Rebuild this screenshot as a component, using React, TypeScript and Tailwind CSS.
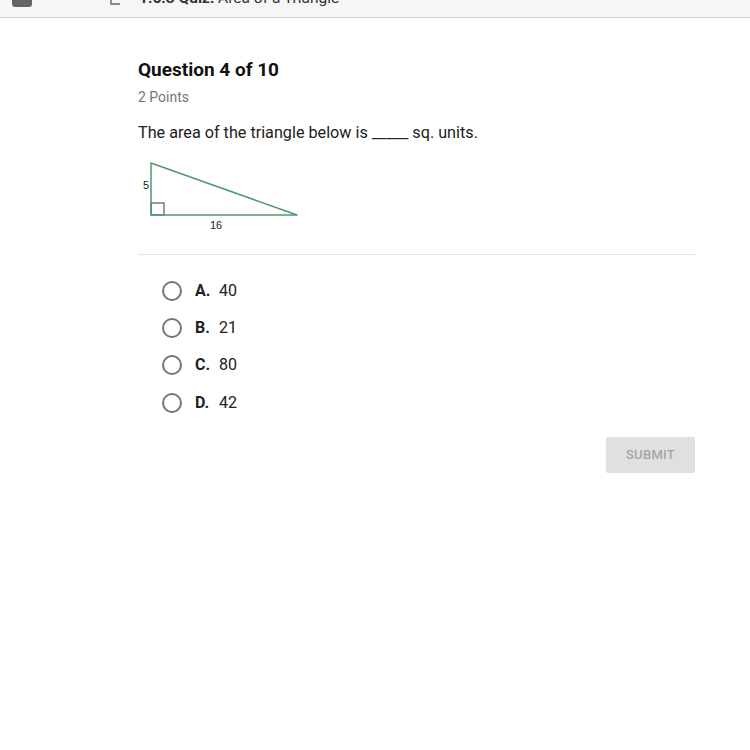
import { useState } from 'react';

const options = [
  { letter: 'A.', value: '40' },
  { letter: 'B.', value: '21' },
  { letter: 'C.', value: '80' },
  { letter: 'D.', value: '42' },
];

function Triangle() {
  return (
    <svg width="170" height="75" viewBox="0 0 170 75" className="block">
      <rect x="13" y="45" width="13" height="12" fill="none" stroke="#7a7a7a" strokeWidth="1.5" />
      <polyline points="13,57 13,5 159,57 13,57" fill="none" stroke="#4e9a6c" strokeWidth="1.5" strokeLinejoin="round" />
      <text x="5" y="31" fontSize="11" fill="#222" fontFamily="Liberation Sans, Arial, sans-serif">5</text>
      <text x="72" y="71" fontSize="11" fill="#222" fontFamily="Liberation Sans, Arial, sans-serif">16</text>
    </svg>
  );
}

export default function App() {
  const [selected, setSelected] = useState<number | null>(null);

  return (
    <div className="min-h-screen bg-white font-['Roboto',_sans-serif] text-[#212121]">
      {/* top bar, scrolled mostly out of view */}
      <div className="h-[18px] bg-[#f6f6f6] border-b border-[#d2d2d2] overflow-hidden flex items-start">
        <div className="ml-[12px] w-[20px] h-[7px] bg-[#646464] rounded-b-[3px]" />
        <div className="ml-[78px] mt-[-10px] w-[10px] h-[15px] border-l-2 border-b-2 border-[#8a8a8a]" />
        <div className="ml-[19px] mt-[-10px] text-[15.5px] leading-[16px] text-[#333] whitespace-nowrap">
          <span className="font-bold">1.6.3 Quiz:</span> Area of a Triangle
        </div>
      </div>

      <div className="ml-[138px] w-[557px] pt-[39px]">
        <h1 className="text-[19px] leading-[25px] font-bold text-[#111]">Question 4 of 10</h1>
        <div className="mt-[5px] text-[14px] leading-[20px] text-[#757575]">2 Points</div>
        <p className="mt-[16px] text-[16.2px] leading-[20px] text-[#212121]">
          The area of the triangle below is _____ sq. units.
        </p>
        <div className="mt-[15px]">
          <Triangle />
        </div>

        <div className="mt-[21px] h-px bg-[#e2e2e2]" />

        <div className="mt-[17px] ml-[24px]">
          {options.map((o, i) => (
            <label key={o.letter} className="h-[37.4px] flex items-center cursor-pointer" onClick={() => setSelected(i)}>
              <span className="w-[20px] h-[20px] rounded-full border-2 border-[#757575] flex items-center justify-center">
                {selected === i ? <span className="w-[10px] h-[10px] rounded-full bg-[#757575]" /> : null}
              </span>
              <span className="ml-[13px] text-[16px] font-bold text-[#212121] w-[24px]">{o.letter}</span>
              <span className="text-[16px] text-[#212121]">{o.value}</span>
            </label>
          ))}
        </div>

        <div className="mt-[15px] flex justify-end">
          <button className="w-[89px] h-[36px] rounded-[2px] bg-[#e0e0e0] text-[13px] font-medium text-[#a6a6a6] tracking-[0.3px]">
            SUBMIT
          </button>
        </div>
      </div>
    </div>
  );
}
